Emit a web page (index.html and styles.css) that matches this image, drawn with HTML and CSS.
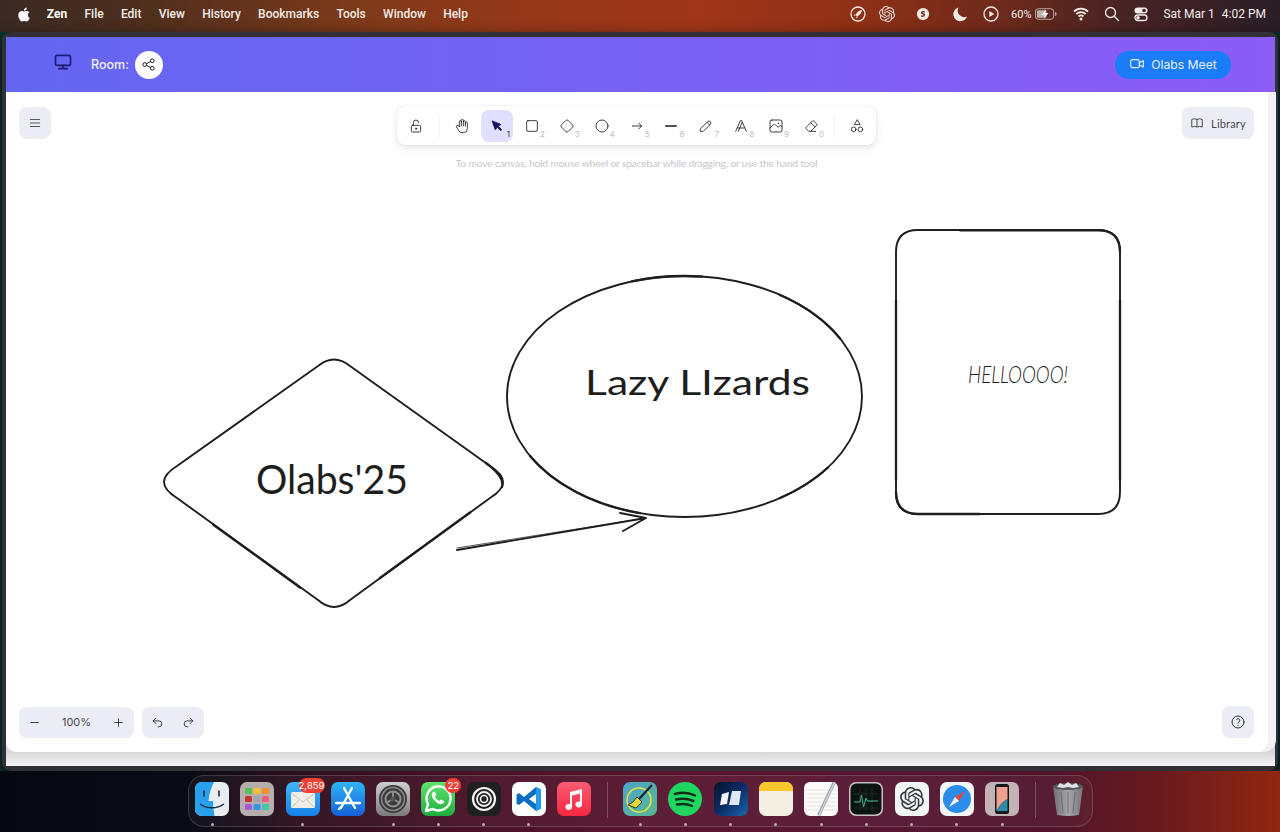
FILE: index.html
```html
<!DOCTYPE html>
<html lang="en">
<head>
<meta charset="utf-8">
<title>Olabs Whiteboard</title>
<link rel="stylesheet" href="styles.css">
</head>
<body>
<svg class="defs" width="0" height="0" aria-hidden="true">
  <symbol id="knot" viewBox="0 0 24 24"><path d="M22.2819 9.8211a5.9847 5.9847 0 0 0-.5157-4.9108 6.0462 6.0462 0 0 0-6.5098-2.9A6.0651 6.0651 0 0 0 4.9807 4.1818a5.9847 5.9847 0 0 0-3.9977 2.9 6.0462 6.0462 0 0 0 .7427 7.0966 5.98 5.98 0 0 0 .511 4.9107 6.051 6.051 0 0 0 6.5146 2.9001A5.9847 5.9847 0 0 0 13.2599 24a6.0557 6.0557 0 0 0 5.7718-4.2058 5.9894 5.9894 0 0 0 3.9977-2.9001 6.0557 6.0557 0 0 0-.7475-7.0729zm-9.022 12.6081a4.4755 4.4755 0 0 1-2.8764-1.0408l.1419-.0804 4.7783-2.7582a.7948.7948 0 0 0 .3927-.6813v-6.7369l2.02 1.1686a.071.071 0 0 1 .038.052v5.5826a4.504 4.504 0 0 1-4.4945 4.4944zm-9.6607-4.1254a4.4708 4.4708 0 0 1-.5346-3.0137l.142.0852 4.783 2.7582a.7712.7712 0 0 0 .7806 0l5.8428-3.3685v2.3324a.0804.0804 0 0 1-.0332.0615L9.74 19.9502a4.4992 4.4992 0 0 1-6.1408-1.6464zM2.3408 7.8956a4.485 4.485 0 0 1 2.3655-1.9728V11.6a.7664.7664 0 0 0 .3879.6765l5.8144 3.3543-2.0201 1.1685a.0757.0757 0 0 1-.071 0l-4.8303-2.7865A4.504 4.504 0 0 1 2.3408 7.872zm16.5963 3.8558L13.1038 8.364 15.1192 7.2a.0757.0757 0 0 1 .071 0l4.8303 2.7913a4.4944 4.4944 0 0 1-.6765 8.1042v-5.6772a.79.79 0 0 0-.407-.667zm2.0107-3.0231l-.142-.0852-4.7735-2.7818a.7759.7759 0 0 0-.7854 0L9.409 9.2297V6.8974a.0662.0662 0 0 1 .0284-.0615l4.8303-2.7866a4.4992 4.4992 0 0 1 6.6802 4.66zM8.3065 12.863l-2.02-1.1638a.0804.0804 0 0 1-.038-.0567V6.0742a4.4992 4.4992 0 0 1 7.3757-3.4537l-.142.0805L8.704 5.459a.7948.7948 0 0 0-.3927.6813zm1.0976-2.3654l2.602-1.4998 2.6069 1.4998v2.9994l-2.5974 1.4997-2.6067-1.4997Z"/></symbol>
</svg>

<header class="menubar">
  <nav class="menu-left">
    <svg class="apple" viewBox="0 0 24 24"><path d="M12.152 6.896c-.948 0-2.415-1.078-3.96-1.04-2.04.027-3.91 1.183-4.961 3.014-2.117 3.675-.546 9.103 1.519 12.09 1.013 1.454 2.208 3.09 3.792 3.039 1.52-.065 2.09-.987 3.935-.987 1.831 0 2.35.987 3.96.948 1.637-.026 2.676-1.48 3.676-2.948 1.156-1.688 1.636-3.325 1.662-3.415-.039-.013-3.182-1.221-3.22-4.857-.026-3.04 2.48-4.494 2.597-4.559-1.429-2.09-3.623-2.324-4.39-2.376-2-.156-3.675 1.09-4.61 1.09zM15.53 3.83c.843-1.012 1.4-2.427 1.245-3.83-1.207.052-2.662.805-3.532 1.818-.78.896-1.454 2.338-1.273 3.714 1.338.104 2.715-.688 3.559-1.701"/></svg>
    <span class="menu-app">Zen</span>
    <span>File</span><span>Edit</span><span>View</span><span>History</span><span>Bookmarks</span><span>Tools</span><span>Window</span><span>Help</span>
  </nav>
  <div class="status">
    <svg class="st" viewBox="0 0 16 16"><circle cx="8" cy="8" r="7" class="st-line"/><path d="M12 4c-3 .3-5 2-6.500 5l1.500 1.500c3-1.500 4.700-3.500 5-6.500z"/><path d="M5 8l-1.500 1.500 2 .3zM8 11l-1.500 1.500-.3-2z"/></svg>
    <svg class="st st-g1" viewBox="0 0 24 24"><use href="#knot"/></svg>
    <svg class="st st-g2" viewBox="0 0 16 16"><circle cx="8" cy="8" r="7"/><path d="M10 6c-1-1-3.500-1-3.500.5S9.500 7.500 9.500 9 7 11 6 10" class="st-cut"/></svg>
    <svg class="st st-g3" viewBox="0 0 16 16"><path d="M6.500 1.500A7 7 0 1 0 15 10.500 6.500 6.500 0 0 1 6.500 1.500z"/></svg>
    <svg class="st st-g4" viewBox="0 0 16 16"><circle cx="8" cy="8" r="7" class="st-line"/><path d="M6.300 5v6l5-3z"/></svg>
    <span class="st-pct">60%</span>
    <svg class="battery" viewBox="0 0 23 12"><rect x=".5" y=".5" width="19" height="11" rx="3" class="st-thin"/><rect x="2" y="2" width="10" height="8" rx="1.500" class="st-fill"/><path d="M21 4v4c1 0 1.500-1 1.500-2s-.5-2-1.500-2z" class="st-fill"/><path d="M11.500 1L7 7h3.500L9 11l5-6h-3.500z"/></svg>
    <svg class="st st-g5" viewBox="0 0 16 16"><path d="M1 5.500a10 10 0 0 1 14 0M3.300 8a6.800 6.800 0 0 1 9.400 0M5.600 10.500a3.500 3.500 0 0 1 4.800 0" class="st-line st-bold"/><circle cx="8" cy="13" r="1.500"/></svg>
    <svg class="st st-g6" viewBox="0 0 16 16"><circle cx="6.500" cy="6.500" r="5" class="st-line"/><path d="M10.200 10.200L15 15" class="st-line"/></svg>
    <svg class="st st-g7" viewBox="0 0 16 16"><rect x="1.500" y="1.500" width="13" height="6" rx="3"/><rect x="2" y="9" width="12" height="5.500" rx="2.700" class="st-line"/><circle cx="11" cy="4.500" r="1.800" class="st-cut2"/><circle cx="5" cy="11.700" r="1.800"/></svg>
    <span class="clock"><span>Sat Mar 1</span><span>4:02 PM</span></span>
  </div>
</header>

<main class="window">
  <div class="app-header">
    <div class="header-left">
      <svg class="monitor" viewBox="0 0 24 24"><rect x="3" y="4" width="18" height="12" rx="2"/><path d="M12 16v4M7 20h10"/></svg>
      <span class="room">Room:</span>
      <button class="share">
        <svg viewBox="0 0 24 24"><circle cx="6" cy="12" r="3"/><circle cx="18" cy="6" r="3"/><circle cx="18" cy="18" r="3"/><path d="M8.700 10.700l6.600-3.400M8.700 13.300l6.600 3.400"/></svg>
      </button>
    </div>
    <button class="meet">
      <svg viewBox="0 0 24 24"><rect x="2.500" y="5.500" width="13" height="12" rx="2.500"/><path d="M15.500 10l6-3v9.500l-6-3z"/></svg>
      <span>Olabs Meet</span>
    </button>
  </div>

  <div class="sheet">
    <section class="canvas">
      <svg class="drawing" viewBox="6 92 1262 660">
        <path class="ink" d="M318 366Q334 353 350 366L490 466Q516 482 490 498L350 600Q334 614 318 600L177 498Q151 482 177 466Z"/>
        <path class="ink-thick" d="M486 463Q505 477 502 487M213 524.500L300 587.500M380 578L470 512.500"/>
        <ellipse class="ink" cx="684.500" cy="396.500" rx="177.500" ry="120.500"/>
        <path class="ink-thick" d="M632 281.400A177.500 120.500 0 0 1 702 276.600M780 295A177.500 120.500 0 0 1 840 338.400M780 498A177.500 120.500 0 0 0 828 467.500M530 456A177.500 120.500 0 0 0 640 513.200"/>
        <path class="ink" d="M918 230H1098Q1120 230 1120 252V492Q1120 514 1098 514H918Q896 514 896 492V252Q896 230 918 230Z"/>
        <path class="ink-thick" d="M960 230.300H1098Q1120 230 1120 252M896 300V480M1120 300V480M896 492Q896 514 918 514H980"/>
        <path class="ink" d="M457 550L646 518M620 513L646 518L623 531"/>
        <path class="ink-thin" d="M457 548L640 519"/>
        <text class="sketch sketch-lg" x="256" y="494" textLength="152" lengthAdjust="spacingAndGlyphs">Olabs'25</text>
        <text class="sketch sketch-md" x="585" y="395" textLength="225" lengthAdjust="spacingAndGlyphs">Lazy LIzards</text>
        <text class="sketch sketch-sm" x="968" y="383" textLength="100" lengthAdjust="spacingAndGlyphs">HELLOOOO!</text>
      </svg>

      <div class="overlay">
        <div class="top-row">
          <div class="top-left">
            <button class="panel-btn">
              <svg class="menu-icon" viewBox="0 0 24 24"><path d="M4 6h16M4 12h16M4 18h16"/></svg>
            </button>
          </div>
          <div class="tool-col">
            <div class="toolbar">
              <button class="tool"><svg viewBox="0 0 24 24"><rect x="5" y="11" width="14" height="10" rx="2"/><circle cx="12" cy="16" r="1"/><path d="M8 11V7a4 4 0 0 1 8 0"/></svg></button>
              <span class="divider"></span>
              <button class="tool"><svg viewBox="0 0 24 24"><path d="M8 13V5.500a1.500 1.500 0 0 1 3 0V12M11 5.500v-2a1.500 1.500 0 1 1 3 0V12M14 5.500a1.500 1.500 0 0 1 3 0V12M17 7.500a1.500 1.500 0 0 1 3 0V16a6 6 0 0 1-6 6h-2 .208a6 6 0 0 1-5.012-2.700l-.196-.300c-.312-.479-1.407-2.388-3.286-5.728a1.500 1.500 0 0 1 .536-2.022 1.867 1.867 0 0 1 2.280.280L8 13"/></svg></button>
              <button class="tool is-active"><svg class="solid" viewBox="0 0 24 24"><path d="M6 6l4.153 11.793a.365.365 0 0 0 .331.207.366.366 0 0 0 .332-.207L13 13l4.787-1.994a.355.355 0 0 0 .213-.323.355.355 0 0 0-.213-.323z"/><path class="tail" d="M13.500 13.500L18 18"/></svg><span class="key">1</span></button>
              <button class="tool"><svg viewBox="0 0 24 24"><rect x="4" y="4" width="16" height="16" rx="2"/></svg><span class="key">2</span></button>
              <button class="tool"><svg viewBox="0 0 24 24"><path d="M10.600 3.400a2 2 0 0 1 2.800 0l7.200 7.200a2 2 0 0 1 0 2.800l-7.200 7.200a2 2 0 0 1-2.800 0l-7.200-7.200a2 2 0 0 1 0-2.800z"/></svg><span class="key">3</span></button>
              <button class="tool"><svg viewBox="0 0 24 24"><circle cx="12" cy="12" r="9"/></svg><span class="key">4</span></button>
              <button class="tool"><svg class="short" viewBox="0 0 24 24"><path d="M4 12h16M15 7l5 5-5 5"/></svg><span class="key">5</span></button>
              <button class="tool"><svg class="bold" viewBox="0 0 24 24"><path d="M4 12h16"/></svg><span class="key">6</span></button>
              <button class="tool"><svg viewBox="0 0 24 24"><path d="M4 20h4L18.500 9.500a2.828 2.828 0 0 0-4-4L4 16zM13.500 6.500l4 4"/></svg><span class="key">7</span></button>
              <button class="tool"><svg viewBox="0 0 24 24"><path d="M4 20L11 4h2l7 16M7 15h10M8 20l5.500-13"/></svg><span class="key">8</span></button>
              <button class="tool"><svg viewBox="0 0 24 24"><rect x="3" y="3" width="18" height="18" rx="3"/><path d="M3 15l5-5c1-1 2-1 3 0l4 4 2-2c1-1 2-1 4 1"/><circle cx="15.500" cy="8" r=".5"/></svg><span class="key">9</span></button>
              <button class="tool"><svg viewBox="0 0 24 24"><path d="M19 20H8.500l-4.210-4.300a1 1 0 0 1 0-1.410l10-10a1 1 0 0 1 1.410 0l5 5a1 1 0 0 1 0 1.410L11.500 20M18 13.300L11.700 7"/></svg><span class="key">0</span></button>
              <span class="divider"></span>
              <button class="tool"><svg viewBox="0 0 24 24"><path d="M12 3l-4 7h8z"/><circle cx="17" cy="17" r="3.500"/><circle cx="7" cy="17" r="3.500"/></svg></button>
            </div>
            <p class="hint">To move canvas, hold mouse wheel or spacebar while dragging, or use the hand tool</p>
          </div>
          <div class="top-right">
            <button class="library">
              <svg viewBox="0 0 24 24"><path d="M3 19a9 9 0 0 1 9 0 9 9 0 0 1 9 0M3 6a9 9 0 0 1 9 0 9 9 0 0 1 9 0M3 6v13M12 6v13M21 6v13"/></svg>
              <span>Library</span>
            </button>
          </div>
        </div>

        <div class="bottom-row">
          <div class="zoom-group">
            <div class="panel zoom">
              <button class="zoom-btn"><svg viewBox="0 0 24 24"><path d="M5 12h14"/></svg></button>
              <span class="zoom-value">100%</span>
              <button class="zoom-btn"><svg viewBox="0 0 24 24"><path d="M12 5v14M5 12h14"/></svg></button>
            </div>
            <div class="panel history">
              <button class="zoom-btn"><svg viewBox="0 0 24 24"><path d="M9 14L4 9l5-5"/><path d="M4 9h10.500a5.500 5.500 0 0 1 0 11H13"/></svg></button>
              <button class="zoom-btn"><svg viewBox="0 0 24 24"><path d="M15 14l5-5-5-5"/><path d="M20 9H9.500a5.500 5.500 0 0 0 0 11H11"/></svg></button>
            </div>
          </div>
          <button class="panel-btn">
            <svg viewBox="0 0 24 24"><circle cx="12" cy="12" r="9"/><path d="M12 17v.01M12 13.500a1.500 1.500 0 0 1 1-1.500 2.600 2.600 0 1 0-3-4"/></svg>
          </button>
        </div>
      </div>
    </section>
  </div>
</main>

<footer class="dock-wrap">
  <div class="dock">
    <div class="dock-item is-open"><svg viewBox="0 0 34 34"><rect width="34" height="34" rx="7" fill="#e8edf2"/><path d="M7 0h12c-3 6-5 12-5.500 19H18c0 5 .5 10 1.500 15H7a7 7 0 0 1-7-7V7a7 7 0 0 1 7-7z" fill="#27a0ee"/><path d="M9 9v5M24 9v5" stroke="#1b2b3f" stroke-width="1.600" fill="none" stroke-linecap="round"/><path d="M5 22c7 5 17 5 24 0" stroke="#1b2b3f" stroke-width="1.300" fill="none"/></svg></div>
    <div class="dock-item"><svg viewBox="0 0 34 34"><rect width="34" height="34" rx="7" fill="#b5adae"/><g><rect x="5" y="6" width="7" height="6" rx="1.500" fill="#55c24c"/><rect x="13.500" y="6" width="7" height="6" rx="1.500" fill="#f4c430"/><rect x="22" y="6" width="7" height="6" rx="1.500" fill="#f2922a"/><rect x="5" y="14" width="7" height="6" rx="1.500" fill="#c8322f"/><rect x="13.500" y="14" width="7" height="6" rx="1.500" fill="#9fa7ad"/><rect x="22" y="14" width="7" height="6" rx="1.500" fill="#ef5c84"/><rect x="5" y="22" width="7" height="6" rx="1.500" fill="#a45ad0"/><rect x="13.500" y="22" width="7" height="6" rx="1.500" fill="#2e96e6"/><rect x="22" y="22" width="7" height="6" rx="1.500" fill="#3fc9a6"/></g></svg></div>
    <div class="dock-item is-open"><svg viewBox="0 0 34 34"><defs><linearGradient id="gMail" x1="0" y1="0" x2="0" y2="1"><stop offset="0" stop-color="#3fb6fb"/><stop offset="1" stop-color="#1780e8"/></linearGradient></defs><rect width="34" height="34" rx="7" fill="url(#gMail)"/><rect x="5" y="10" width="24" height="16" rx="1.500" fill="#f1ede6"/><path d="M5 11l12 9 12-9M5 26l9-9M29 26l-9-9" stroke="#cfc7bb" stroke-width="1" fill="none"/></svg><span class="badge badge-wide">2,859</span></div>
    <div class="dock-item"><svg viewBox="0 0 34 34"><defs><linearGradient id="gStore" x1="0" y1="0" x2="0" y2="1"><stop offset="0" stop-color="#2fb4f6"/><stop offset="1" stop-color="#1560d8"/></linearGradient></defs><rect width="34" height="34" rx="7" fill="url(#gStore)"/><path d="M21 6L10 26M13 6l11 20M5 21h24M8 27l3-3" stroke="#fff" stroke-width="2.300" fill="none" stroke-linecap="round"/></svg></div>
    <div class="dock-item is-open"><svg viewBox="0 0 34 34"><defs><linearGradient id="gSys" x1="0" y1="0" x2="0" y2="1"><stop offset="0" stop-color="#cfcfcf"/><stop offset="1" stop-color="#7b7b7b"/></linearGradient></defs><rect width="34" height="34" rx="7" fill="url(#gSys)"/><circle cx="17" cy="17" r="14" fill="#3b3b3b"/><circle cx="17" cy="17" r="11.500" fill="none" stroke="#8a8a8a" stroke-width="1.500"/><circle cx="17" cy="17" r="7.500" fill="none" stroke="#8f8f8f" stroke-width="2"/><path d="M17 17V9M17 17l7 4M17 17l-7 4" stroke="#8f8f8f" stroke-width="2"/><circle cx="17" cy="17" r="2.500" fill="#555"/></svg></div>
    <div class="dock-item is-open"><svg viewBox="0 0 34 34"><defs><linearGradient id="gWa" x1="0" y1="0" x2="0" y2="1"><stop offset="0" stop-color="#5fe36d"/><stop offset="1" stop-color="#1eae3f"/></linearGradient></defs><rect width="34" height="34" rx="7" fill="url(#gWa)"/><path d="M5 29l2-7a12 12 0 1 1 5 5z" fill="none" stroke="#fff" stroke-width="2.400" stroke-linejoin="round"/><path d="M12 10c-2 2-1.500 5 1.500 8.500s6 4.500 8.500 3c1-.7 1.500-2 1-2.500l-3-1.500-1.500 1.500c-2-.8-3.700-2.600-4.500-4.500l1.500-1.500-1.500-3c-.5-.5-1.300-.5-2 0z" fill="#fff"/></svg><span class="badge badge-num">22</span></div>
    <div class="dock-item is-open"><svg viewBox="0 0 34 34"><rect width="34" height="34" rx="7" fill="#202020"/><circle cx="17" cy="17" r="11" fill="none" stroke="#f4f4f4" stroke-width="2.200"/><circle cx="17" cy="17" r="7" fill="none" stroke="#f4f4f4" stroke-width="1.800"/><circle cx="17" cy="17" r="3.500" fill="none" stroke="#f4f4f4" stroke-width="1.600"/></svg></div>
    <div class="dock-item is-open"><svg viewBox="0 0 34 34"><rect width="34" height="34" rx="7" fill="#fff"/><path d="M24 5l5 2.400v19.200L24 29 12 19l-5 4-2.500-1.500v-9L7 11l5 4zM24 12l-7 5 7 5z" fill="#0a6fc2" fill-rule="evenodd"/><path d="M24 5l5 2.400v19.200L24 29z" fill="#1f9cf0"/></svg></div>
    <div class="dock-item"><svg viewBox="0 0 34 34"><defs><linearGradient id="gMusic" x1="0" y1="0" x2="0" y2="1"><stop offset="0" stop-color="#fb5c74"/><stop offset="1" stop-color="#f7263f"/></linearGradient></defs><rect width="34" height="34" rx="7" fill="url(#gMusic)"/><path d="M13 10l12-3v15.500a3.300 3 0 1 1-2-2.800V11.500l-8 2v11.500a3.300 3 0 1 1-2-2.800z" fill="#fff"/></svg></div>
    <span class="dock-sep"></span>
    <div class="dock-item is-open"><svg viewBox="0 0 34 34"><defs><linearGradient id="gClean" x1="0" y1="0" x2="1" y2="1"><stop offset="0" stop-color="#4aa6cf"/><stop offset="1" stop-color="#5ab58f"/></linearGradient></defs><rect width="34" height="34" rx="7" fill="url(#gClean)"/><circle cx="16" cy="18" r="12" fill="none" stroke="#e8e23a" stroke-width="1.600"/><path d="M29 3L16 17" stroke="#16202a" stroke-width="2"/><path d="M14 15l5 5-6 6-8-3 5-3z" fill="#e8d93a" stroke="#16202a" stroke-width=".8"/></svg></div>
    <div class="dock-item is-open"><svg viewBox="0 0 34 34"><circle cx="17" cy="17" r="17" fill="#1ed760"/><path d="M7 12c7-2 14-1.500 20 1.500M8 17.500c6-1.500 12-1 17.500 1.500M9 22.500c5-1 10.500-.8 15 1.500" fill="none" stroke="#123018" stroke-width="2.500" stroke-linecap="round"/></svg></div>
    <div class="dock-item is-open"><svg viewBox="0 0 34 34"><defs><linearGradient id="gCards" x1="0" y1="0" x2="1" y2="1"><stop offset="0" stop-color="#07142e"/><stop offset=".5" stop-color="#0c2c66"/><stop offset="1" stop-color="#1a66ac"/></linearGradient></defs><rect width="34" height="34" rx="7" fill="url(#gCards)"/><path d="M15 10l-7 2-2 11 7-1z" fill="#f4f6fb"/><path d="M18 9h9l-2 14H15z" fill="#dfe6f6"/></svg></div>
    <div class="dock-item is-open"><svg viewBox="0 0 34 34"><rect width="34" height="34" rx="7" fill="#f3efe2"/><path d="M7 0h20a7 7 0 0 1 7 7v2H0V7a7 7 0 0 1 7-7z" fill="#fbc82b"/></svg></div>
    <div class="dock-item is-open"><svg viewBox="0 0 34 34"><rect width="34" height="34" rx="6" fill="#fbfbfb"/><path d="M2 8h30M2 12h30M2 16h30M2 20h30M2 24h30M2 28h30" stroke="#e8d8d0" stroke-width=".7"/><path d="M29-1l3 1.500L16 34l-3-1z" fill="#9da5ad"/><path d="M30 0l1 .5L15 34h-1z" fill="#dfe3e6"/></svg></div>
    <div class="dock-item is-open"><svg viewBox="0 0 34 34"><rect width="34" height="34" rx="7" fill="#c9bfc6"/><rect x="1.500" y="1.500" width="31" height="31" rx="6" fill="#0c1411"/><path d="M5 12h24M5 19h24M5 26h24M11 6v23M17 6v23M23 6v23" stroke="#1e3830" stroke-width=".6"/><path d="M5 20h6l1.500-7 2 12 2.500-9 1.500 3H29" fill="none" stroke="#42b391" stroke-width="1"/></svg></div>
    <div class="dock-item is-open"><svg viewBox="0 0 34 34"><rect width="34" height="34" rx="7" fill="#f3f4f6"/><svg x="5" y="5" width="24" height="24" viewBox="0 0 24 24" fill="#33383c"><use href="#knot"/></svg></svg></div>
    <div class="dock-item is-open"><svg viewBox="0 0 34 34"><rect width="34" height="34" rx="7" fill="#f4f5f7"/><circle cx="17" cy="17" r="14" fill="#2b8cea"/><path d="M25 9l-10 6 4 4z" fill="#e8453a"/><path d="M9 25l6-10 4 4z" fill="#f4f4f4"/></svg></div>
    <div class="dock-item is-open"><svg viewBox="0 0 34 34"><rect width="34" height="34" rx="7" fill="#c3b3b7"/><rect x="10" y="2" width="14" height="30" rx="2.500" fill="#16181c"/><path d="M11.500 5h11v12c-4 2-8 6-11 12z" fill="#f0a08e"/><path d="M11.500 29c3-6 7-10 11-12v12z" fill="#2f8ca8"/><rect x="14.500" y="3" width="5" height="1.600" rx=".8" fill="#16181c"/></svg></div>
    <span class="dock-sep"></span>
    <div class="dock-item"><svg viewBox="0 0 34 34"><defs><linearGradient id="gTrash" x1="0" y1="0" x2="1" y2="0"><stop offset="0" stop-color="#6e6e70"/><stop offset=".5" stop-color="#a6a6a8"/><stop offset="1" stop-color="#77777a"/></linearGradient></defs><path d="M2 4h30l-4 29q-11 2-22 0z" fill="url(#gTrash)"/><ellipse cx="17" cy="4.500" rx="15" ry="3.500" fill="#54565a"/><path d="M6 5l3-4 4 2 4-3 4 3 4-2 3 4-6 1-5-1-5 1z" fill="#e3e3e3"/><path d="M10 10l2 21M17 10v21M24 10l-2 21" stroke="#5d5d60" stroke-width=".7"/></svg></div>
  </div>
</footer>
</body>
</html>
```

FILE: styles.css
```css
* { box-sizing: border-box; }
html, body { margin: 0; padding: 0; }
body {
  width: 1280px;
  height: 832px;
  overflow: hidden;
  display: flex;
  flex-direction: column;
  font-family: "Inter", "Liberation Sans", sans-serif;
  background: linear-gradient(to right, #0c3230 0, #0a2b2c 100%);
}
button { border: 0; padding: 0; background: none; font: inherit; color: inherit; display: flex; align-items: center; justify-content: center; }
.defs { position: absolute; }

/* menu bar */
.menubar {
  height: 32px;
  flex: none;
  display: flex;
  align-items: center;
  justify-content: space-between;
  padding: 0 14px 4px 17px;
  color: #f4ece6;
  font-family: "Roboto", "Liberation Sans", sans-serif;
  font-size: 12px;
  font-weight: 500;
  background: linear-gradient(to right, #3a2a24 0, #4c2e1e 130px, #7d3a1a 360px, #96381a 520px, #a0361a 700px, #8e3016 860px, #6e2a1c 1000px, #482323 1120px, #2a1e28 1280px);
}
.menu-left { display: flex; align-items: center; gap: 17.300px; }
.apple { width: 14px; height: 15px; fill: #fff; margin-right: -1.500px; }
.menu-app { font-weight: 700; color: #fff; font-size: 12px; }
.status { display: flex; align-items: center; }
.st { width: 16px; height: 16px; fill: #f4ece6; flex: none; }
.st-line { fill: none; stroke: #f4ece6; stroke-width: 1.300; }
.st-bold { stroke-width: 1.800; }
.st-thin { fill: none; stroke: #d8cfca; stroke-width: .8; }
.st-fill { fill: #bdb2ac; }
.st-cut { fill: none; stroke: #6a2a1e; stroke-width: 1.600; }
.st-cut2 { fill: #4a2422; }
.st-g1 { margin-left: 13px; fill: none; }
.st-g1 use { fill: #e8ddd6; }
.st-g2 { margin-left: 21px; width: 14px; }
.st-g3 { margin-left: 22px; }
.st-g4 { margin-left: 15px; }
.st-pct { margin-left: 12px; font-size: 11px; font-weight: 400; }
.battery { width: 22px; height: 12px; margin-left: 4px; fill: #fff; flex: none; }
.st-g5 { margin-left: 16px; }
.st-g6 { margin-left: 15px; }
.st-g7 { margin-left: 13px; }
.clock { margin-left: 14px; display: flex; gap: 7px; font-weight: 400; font-size: 12px; }

/* window */
.window {
  height: 739px;
  flex: none;
  margin: 0 2px;
  padding: 5px 3px 5px 4px;
  border-radius: 9px;
  background: #332f36;
  display: flex;
  flex-direction: column;
  box-shadow: 0 4px 14px rgba(0, 0, 0, .65);
}
.app-header {
  height: 55px;
  flex: none;
  display: flex;
  align-items: center;
  justify-content: space-between;
  padding: 0 44px 0 47px;
  background: linear-gradient(to right, #6366f1, #8b5cf6);
}
.header-left { display: flex; align-items: center; }
.monitor { width: 20px; height: 20px; margin-bottom: 5px; fill: none; stroke: #1e1a78; stroke-width: 2; stroke-linecap: round; }
.room { margin-left: 18px; color: #f1eefe; font-size: 12.500px; font-weight: 500; }
.share { width: 28px; height: 28px; margin-left: 6px; border-radius: 50%; background: #fff; }
.share svg { width: 15px; height: 15px; fill: none; stroke: #1b1b1f; stroke-width: 1.600; }
.meet {
  width: 116px;
  height: 28px;
  gap: 6px;
  border-radius: 14px;
  background: #1a7cf6;
  color: #e6f0ff;
  font-size: 12.200px;
}
.meet svg { width: 16px; height: 16px; margin-bottom: 2px; fill: none; stroke: #eaf2ff; stroke-width: 1.700; stroke-linejoin: round; }

.sheet {
  flex: 1;
  min-height: 0;
  padding: 0 7px 14px 0;
  background: linear-gradient(to bottom, #d6d6d6 calc(100% - 14px), #f4f4f4 100%);
}
.canvas {
  position: relative;
  height: 100%;
  background: #fff;
  border-radius: 0 0 12px 10px;
  box-shadow: 8px 0 0 #f1f1f1;
}
.drawing { position: absolute; inset: 0; width: 100%; height: 100%; }
.ink { fill: none; stroke: #1e1e1e; stroke-width: 1.900; stroke-linejoin: round; stroke-linecap: round; }
.ink-thin { fill: none; stroke: #1e1e1e; stroke-width: 1; stroke-linecap: round; opacity: .75; }
.ink-thick { fill: none; stroke: #1e1e1e; stroke-width: 2.300; stroke-linecap: round; }
.sketch { fill: #1e1e1e; font-family: "Lato", sans-serif; }
.sketch-lg { font-size: 41px; font-weight: 400; }
.sketch-md { font-size: 35px; font-weight: 400; }
.sketch-sm { font-size: 23px; font-weight: 300; font-style: italic; }

/* overlays */
.overlay {
  position: absolute;
  inset: 0;
  display: flex;
  flex-direction: column;
  justify-content: space-between;
  padding: 14px 14px 14px 13px;
}
.top-row { display: grid; grid-template-columns: 1fr auto 1fr; align-items: start; }
.top-right { display: flex; justify-content: flex-end; }
.panel-btn {
  width: 32px;
  height: 32px;
  margin-top: 1px;
  border-radius: 8px;
  background: #ececf4;
}
.panel-btn svg { width: 16px; height: 16px; fill: none; stroke: #33333a; stroke-width: 1.500; stroke-linecap: round; stroke-linejoin: round; }
.panel-btn svg.menu-icon { width: 14px; height: 14px; stroke-width: 1.400; }
.bottom-row .panel-btn { margin-top: 0; }
.tool-col { display: flex; flex-direction: column; align-items: center; }
.toolbar {
  display: flex;
  align-items: center;
  height: 39px;
  padding: 0 3px;
  gap: 2.900px;
  background: #fff;
  border-radius: 8px;
  box-shadow: 0 0 1px rgba(0, 0, 0, .22), 0 2px 6px rgba(0, 0, 0, .08), 0 6px 14px rgba(0, 0, 0, .03);
}
.tool {
  position: relative;
  width: 32px;
  height: 32px;
  border-radius: 8px;
}
.tool svg { width: 16px; height: 16px; fill: none; stroke: #1b1b1f; stroke-width: 1.250; stroke-linecap: round; stroke-linejoin: round; }
.tool svg.bold { stroke-width: 2; }
.tool svg.short { width: 14px; height: 14px; stroke-width: 1.500; }
.tool svg.solid { width: 17px; height: 17px; fill: #16135c; stroke: #16135c; }
.tail { stroke-width: 3; }
.tool.is-active { background: #e0dfff; }
.key {
  position: absolute;
  right: 3px;
  bottom: 3px;
  font-size: 8px;
  line-height: 10px;
  color: #bdbdc4;
}
.is-active .key { color: #33333a; }
.divider { width: 1px; height: 24px; margin: 0 3px 0 4px; background: #f3f3f5; }
.hint {
  margin: 11px 0 0;
  font-family: "Lato", sans-serif;
  font-size: 10.300px;
  letter-spacing: -.18px;
  line-height: 14px;
  color: #c6c6cc;
  white-space: nowrap;
}
.library {
  height: 32px;
  width: 72px;
  margin-top: 1px;
  gap: 7px;
  border-radius: 8px;
  background: #ececf4;
  color: #4a4a52;
  font-family: "Lato", sans-serif;
  font-size: 11px;
  letter-spacing: .2px;
}
.library svg { width: 14px; height: 14px; fill: none; stroke: #33333a; stroke-width: 1.500; stroke-linejoin: round; }
.bottom-row { display: flex; justify-content: space-between; align-items: center; }
.zoom-group { display: flex; gap: 8px; }
.panel {
  height: 31px;
  display: flex;
  align-items: center;
  border-radius: 8px;
  background: #ececf4;
}
.zoom { width: 115px; justify-content: space-between; }
.history { width: 62px; justify-content: space-between; }
.zoom-btn { width: 31px; height: 31px; }
.zoom-btn svg { width: 13px; height: 13px; fill: none; stroke: #33333a; stroke-width: 1.700; stroke-linecap: round; stroke-linejoin: round; }
.zoom-value { font-size: 11px; color: #4a4a52; }

/* dock */
.dock-wrap {
  flex: 1;
  display: flex;
  justify-content: center;
  padding-top: 4px;
  background: linear-gradient(to right, #05090f 0, #0a0c15 190px, #2e0f1e 300px, #4a1228 480px, #5a1630 680px, #561632 900px, #50152c 1050px, #6a1a1e 1160px, #902710 1280px);
}
.dock {
  position: relative;
  width: 905px;
  height: 52px;
  padding: 6px 7px 0 6.500px;
  display: flex;
  align-items: flex-start;
  gap: 11.250px;
  border: 1px solid rgba(255, 255, 255, .16);
  border-radius: 16px;
  background: rgba(255, 255, 255, .035);
}
.dock-item { position: relative; width: 34px; height: 34px; flex: none; }
.dock-item > svg { display: block; width: 34px; height: 34px; }
.dock-item.is-open::after {
  content: "";
  position: absolute;
  left: 15.500px;
  top: 41px;
  width: 3px;
  height: 3px;
  border-radius: 50%;
  background: #b8aeb0;
}
.dock-sep { width: 1px; height: 36px; flex: none; margin: 0 4.250px; background: rgba(255, 255, 255, .22); }
.badge {
  position: absolute;
  top: -4px;
  display: flex;
  align-items: center;
  justify-content: center;
  height: 15px;
  border-radius: 8px;
  background: #ee4036;
  color: #fff;
  font-size: 9.500px;
  font-weight: 400;
}
.badge-wide { left: 13px; width: 26px; }
.badge-num { left: 24px; width: 16px; }
```
